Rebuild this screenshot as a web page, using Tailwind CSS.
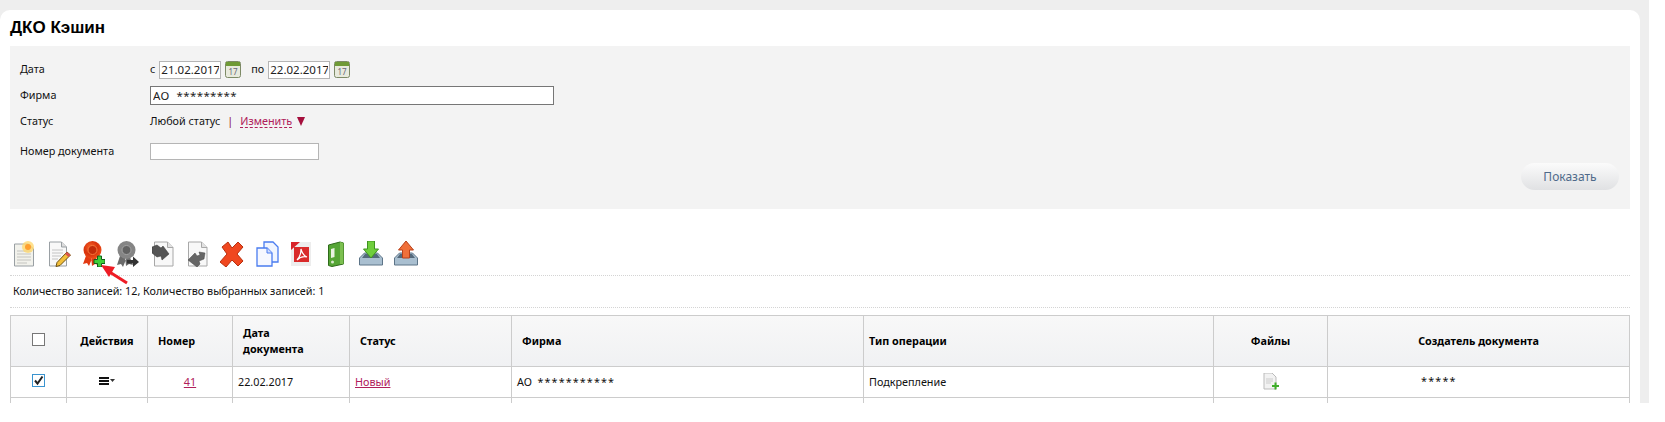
<!DOCTYPE html>
<html lang="ru">
<head>
    <meta charset="UTF-8">
    <title>ДКО Кэшин</title>
    <script src="https://cdn.jsdelivr.net/npm/@tailwindcss/browser@4"></script>
</head>
<body class="bg-white overflow-hidden font-['Noto_Sans',sans-serif] text-[10.8px] text-[#111]">
    <div class="w-[1649px] h-[403px] bg-[#eeeeee] pt-[10px] overflow-hidden">
        <div class="w-[1640px] h-[420px] bg-white rounded-t-[10px]">
            <h1 class="h-[36px] pl-[10px] pt-[7px] font-['Liberation_Sans',sans-serif] font-bold text-[17px] leading-[22px] text-black">ДКО Кэшин</h1>

            <!-- filter -->
            <div class="ml-[10px] w-[1620px] h-[163px] bg-[#f3f3f3] pl-[10px] pt-[15px]">
                <div class="flex items-center h-[17px]">
                    <div class="w-[130px]">Дата</div>
                    <span class="mr-[4px]">с</span>
                    <input class="w-[62px] h-[18px] bg-white border border-[#b5b5b5] px-[1px] text-[11.500px] text-[#222]" value="21.02.2017">
                    <svg class="ml-[4px] w-[16px] h-[17px]" viewBox="0 0 16 17">
                        <rect x="0.5" y="0.5" width="15" height="16" rx="2" fill="#e8eadd" stroke="#7d8a66"/>
                        <rect x="1" y="1" width="14" height="4" fill="#6f9a35"/>
                        <text x="8" y="14" text-anchor="middle" font-size="8" fill="#667">17</text>
                    </svg>
                    <span class="ml-[10px] mr-[4px]">по</span>
                    <input class="w-[62px] h-[18px] bg-white border border-[#b5b5b5] px-[1px] text-[11.500px] text-[#222]" value="22.02.2017">
                    <svg class="ml-[4px] w-[16px] h-[17px]" viewBox="0 0 16 17">
                        <rect x="0.5" y="0.5" width="15" height="16" rx="2" fill="#e8eadd" stroke="#7d8a66"/>
                        <rect x="1" y="1" width="14" height="4" fill="#6f9a35"/>
                        <text x="8" y="14" text-anchor="middle" font-size="8" fill="#667">17</text>
                    </svg>
                </div>
                <div class="flex items-center h-[19px] mt-[8px]">
                    <div class="w-[130px]">Фирма</div>
                    <input class="w-[404px] h-[19px] bg-white border border-[#767676] px-[2px] text-[11.500px] tracking-[0.4px] text-[#222]" value="АО  *********">
                </div>
                <div class="flex items-center h-[16px] mt-[8px]">
                    <div class="w-[130px]">Статус</div>
                    <span>Любой статус</span>
                    <span class="mx-[7px] text-[#8a1040]">|</span>
                    <span class="text-[#b0205a] border-b border-dashed border-[#b0205a] leading-[13px]">Изменить</span>
                    <span class="ml-[5px] w-0 h-0 border-x-[4px] border-t-[9px] border-x-transparent border-t-[#a50f3c]"></span>
                </div>
                <div class="flex items-center h-[17px] mt-[14px]">
                    <div class="w-[130px]">Номер документа</div>
                    <input class="w-[169px] h-[17px] bg-white border border-[#b5b5b5]">
                </div>
                <div class="flex justify-end pr-[11px] mt-[3px]">
                    <button class="w-[98px] h-[27px] rounded-full bg-linear-to-b from-[#fbfbfb] to-[#e0e1e3] text-[12px] text-[#4f6a8a]">Показать</button>
                </div>
            </div>

            <!-- toolbar -->
            <div class="relative ml-[10px] w-[1620px] h-[35px] mt-[32px] border-b border-dotted border-[#d4d4d4] flex items-start">
                <div class="flex pl-[4px]">
                    <svg class="w-[20px] h-[26px] mr-[15px]" viewBox="0 0 20 26">
                        <path d="M0.500 3h14l5 5v17H0.500z" fill="#f2f2ec" stroke="#9aa0a4"/>
                        <path d="M3 10h14M3 13h14M3 16h14M3 19h14M3 22h10" stroke="#c4c4c0"/>
                        <circle cx="14" cy="6" r="6" fill="#ffd76a" opacity=".75"/>
                        <circle cx="14" cy="6" r="3" fill="#ff9f2e"/>
                    </svg>
                    <svg class="w-[22px] h-[26px] mr-[12px]" viewBox="0 0 22 26">
                        <path d="M0.500 1h12l5 5v19H0.500z" fill="#f8f8f8" stroke="#9aa0a4"/>
                        <path d="M12.500 1v5h5" fill="#ddd" stroke="#9aa0a4"/>
                        <path d="M3 9h11M3 12h11M3 15h9M3 18h6" stroke="#c4c4c4"/>
                        <path d="M18 11l3.500 3L11 24.500 7 25.500l1-4z" fill="#f2bf3a" stroke="#6d5010"/>
                        <path d="M18 11l3.500 3-2 2-3.500-3z" fill="#d9534f"/>
                    </svg>
                    <svg class="w-[22px] h-[26px] mr-[12px]" viewBox="0 0 22 26">
                        <defs>
                            <radialGradient id="medalRed" cx=".4" cy=".35" r=".7"><stop offset="0" stop-color="#f9652a"/><stop offset=".55" stop-color="#d8320c"/><stop offset="1" stop-color="#f2541a"/></radialGradient>
                        </defs>
                        <path d="M4 12L0 23l4-1 2 3 4-10zM12 14l4 10-4-1-3 2-1-10z" fill="#e23a12"/>
                        <circle cx="9.500" cy="9" r="9" fill="url(#medalRed)"/>
                        <circle cx="9.500" cy="9" r="4.500" fill="#c22c0a" stroke="#f67a3e"/>
                        <path d="M11 18.500h3.500V15h4v3.500H22v4h-3.500V26h-4v-3.500H11z" fill="#3fd03a" stroke="#13601a"/>
                    </svg>
                    <svg class="w-[22px] h-[26px] mr-[13px]" viewBox="0 0 22 26">
                        <path d="M4 12L0 24l4-1 2 3 4-10zM12 14l4 10-4-1-3 2-1-10z" fill="#6a6a6a"/>
                        <circle cx="9.500" cy="9" r="9" fill="#858585"/>
                        <circle cx="9.500" cy="9" r="4.500" fill="#626262" stroke="#a4a4a4"/>
                        <path d="M10 19h6v-3.500l6 5.500-6 5v-3.500h-6z" fill="#333"/>
                    </svg>
                    <svg class="w-[22px] h-[26px] mr-[13px]" viewBox="0 0 22 26">
                        <path d="M2.500 1h13l5.500 5.500V25H2.500z" fill="#f8f8f8" stroke="#a8a8a8"/>
                        <path d="M15.500 1v5.500H21" fill="#e2e2e2" stroke="#a8a8a8"/>
                        <path d="M0 6l5-2 4 3 2-2 6 8-7 6-1-4-4 1-5-4z" fill="#555" stroke="#333" stroke-width=".5"/>
                    </svg>
                    <svg class="w-[21px] h-[26px] mr-[12px]" viewBox="0 0 21 26">
                        <path d="M1.500 1h13L20 6.500V25H1.500z" fill="#f8f8f8" stroke="#a8a8a8"/>
                        <path d="M14.500 1v5.500H20" fill="#e2e2e2" stroke="#a8a8a8"/>
                        <path d="M18 12l-1 6-5 2 1 3-3 3-9-7 7-7 2 3 3-1-1-3z" fill="#666" stroke="#444" stroke-width=".5"/>
                    </svg>
                    <svg class="w-[24px] h-[26px] mr-[12px]" viewBox="0 0 24 26">
                        <path d="M2 6l6-5 4 6 6-6 5 5-6 7 6 7-5 5-6-6-6 7-6-5 7-8z" fill="#f0471f" stroke="#b8300f"/>
                    </svg>
                    <svg class="w-[23px] h-[26px] mr-[11px]" viewBox="0 0 23 26">
                        <path d="M8 1h9l5 5v15H8z" fill="#f0f5ff" stroke="#4a7cf0" stroke-width="1.300"/>
                        <path d="M1 7h10l5 5v13H1z" fill="#f6f8ff" stroke="#4a7cf0" stroke-width="1.300"/>
                        <path d="M11 7v5h5" fill="#cfdcff" stroke="#4a7cf0"/>
                    </svg>
                    <svg class="w-[22px] h-[26px] mr-[16px]" viewBox="0 0 22 26">
                        <path d="M1 1h20v24H1z" fill="#ededed"/>
                        <path d="M1 9V1h9z" fill="#d8232a"/>
                        <path d="M4 6h15v15H4z" fill="#d92a2a"/>
                        <path d="M7 19c3-3 4-7 4-11 1 4 3 7 6 8-3-1-7 0-10 3z" fill="none" stroke="#fff" stroke-width="1.200"/>
                    </svg>
                    <svg class="w-[16px] h-[26px] mr-[15px]" viewBox="0 0 16 26">
                        <path d="M0.500 4L12 1l3.500 1v21L4 25.500l-3.500-1z" fill="#55a535" stroke="#2e6a1a"/>
                        <path d="M12 1v22l3.500 0V2z" fill="#7cc050"/>
                        <path d="M3 8l3.500-1v9L3 17z" fill="#e9f2e2"/>
                        <circle cx="4.500" cy="21" r="1.500" fill="#d7e8cc"/>
                    </svg>
                    <svg class="w-[24px] h-[26px] mr-[11px]" viewBox="0 0 24 26">
                        <path d="M0.500 17l5-5h13l5 5v7h-23z" fill="#a9bfd0" stroke="#5d7488"/>
                        <path d="M3 17h18l-3-4H6z" fill="#54697b"/>
                        <path d="M8.500 0h7v8h4l-7.500 9-7.500-9h4z" fill="#6fce3c" stroke="#3f9220"/>
                    </svg>
                    <svg class="w-[24px] h-[26px]" viewBox="0 0 24 26">
                        <path d="M0.500 17l5-5h13l5 5v7h-23z" fill="#a9bfd0" stroke="#5d7488"/>
                        <path d="M3 17h18l-3-4H6z" fill="#54697b"/>
                        <path d="M8.500 17h7V9h4L12 0 4.500 9h4z" fill="#f0703a" stroke="#b8401a"/>
                    </svg>
                </div>
                <!-- annotation arrow -->
                <svg class="absolute left-[88px] top-[22px] w-[32px] h-[24px]" viewBox="0 0 32 24">
                    <path d="M29 20L10 8" stroke="#ee1c25" stroke-width="3"/>
                    <path d="M3 2l14 2-6 10z" fill="#ee1c25"/>
                </svg>
            </div>

            <div class="ml-[10px] w-[1620px] h-[32px] pl-[3px] flex items-center border-b border-dotted border-[#d4d4d4]">Количество записей: 12, Количество выбранных записей: 1</div>

            <!-- table -->
            <table class="ml-[10px] mt-[7px] w-[1619px] table-fixed border-collapse">
                <colgroup>
                    <col class="w-[56px]"><col class="w-[81px]"><col class="w-[85px]"><col class="w-[117px]"><col class="w-[162px]"><col class="w-[352px]"><col class="w-[350px]"><col class="w-[114px]"><col class="w-[302px]">
                </colgroup>
                <thead>
                    <tr class="h-[51px] bg-linear-to-b from-[#f8f8f8] to-[#f0f1f3] font-bold text-black">
                        <th class="border border-[#cccccc] text-center"><span class="inline-block w-[13px] h-[13px] border border-[#777] bg-white align-middle -mt-[5px]"></span></th>
                        <th class="border border-[#cccccc] text-center">Действия</th>
                        <th class="border border-[#cccccc] text-left pl-[10px]">Номер</th>
                        <th class="border border-[#cccccc] text-left pl-[10px] leading-[16px]">Дата<br>документа</th>
                        <th class="border border-[#cccccc] text-left pl-[10px]">Статус</th>
                        <th class="border border-[#cccccc] text-left pl-[10px]">Фирма</th>
                        <th class="border border-[#cccccc] text-left pl-[5px]">Тип операции</th>
                        <th class="border border-[#cccccc] text-center">Файлы</th>
                        <th class="border border-[#cccccc] text-center">Создатель документа</th>
                    </tr>
                </thead>
                <tbody>
                    <tr class="h-[31px]">
                        <td class="border border-[#cccccc] text-center">
                            <span class="inline-flex items-center justify-center w-[13px] h-[13px] border border-[#3a94d0] bg-white align-middle -mt-[5px]">
                                <svg class="w-[11px] h-[11px]" viewBox="0 0 11 11"><path d="M2 5.500l2.500 3L9.500 1.500" fill="none" stroke="#222" stroke-width="2"/></svg>
                            </span>
                        </td>
                        <td class="border border-[#cccccc] text-center">
                            <svg class="inline-block w-[16px] h-[8px] align-middle -mt-[5px]" viewBox="0 0 16 8">
                                <path d="M0 0h10v2H0zM0 3h10v2H0zM0 6h10v2H0z" fill="#111"/>
                                <path d="M11 2h5l-2.500 3z" fill="#333"/>
                            </svg>
                        </td>
                        <td class="border border-[#cccccc] text-center"><a class="text-[#b0205a] underline">41</a></td>
                        <td class="border border-[#cccccc] pl-[5px]">22.02.2017</td>
                        <td class="border border-[#cccccc] pl-[5px]"><a class="text-[#b0205a] underline">Новый</a></td>
                        <td class="border border-[#cccccc] pl-[5px]">АО &nbsp;<span class="tracking-[1.1px]">***********</span></td>
                        <td class="border border-[#cccccc] pl-[5px]">Подкрепление</td>
                        <td class="border border-[#cccccc] text-center">
                            <svg class="inline-block w-[16px] h-[17px] align-middle -mt-[4px]" viewBox="0 0 16 17">
                                <path d="M1 0h8l4 4v12H1z" fill="#f2f2f2" stroke="#bbb"/>
                                <path d="M3 6h7M3 8h7M3 10h5" stroke="#ccc"/>
                                <path d="M9 12h2.500V9.500h2V12H16v2h-2.500v2.500h-2V14H9z" fill="#3fae2a"/>
                            </svg>
                        </td>
                        <td class="border border-[#cccccc] pl-[93px] pb-[2px] tracking-[1.2px]">*****</td>
                    </tr>
                    <tr class="h-[31px]">
                        <td class="border border-[#cccccc]"></td><td class="border border-[#cccccc]"></td><td class="border border-[#cccccc]"></td><td class="border border-[#cccccc]"></td><td class="border border-[#cccccc]"></td><td class="border border-[#cccccc]"></td><td class="border border-[#cccccc]"></td><td class="border border-[#cccccc]"></td><td class="border border-[#cccccc]"></td>
                    </tr>
                </tbody>
            </table>
        </div>
    </div>
</body>
</html>
